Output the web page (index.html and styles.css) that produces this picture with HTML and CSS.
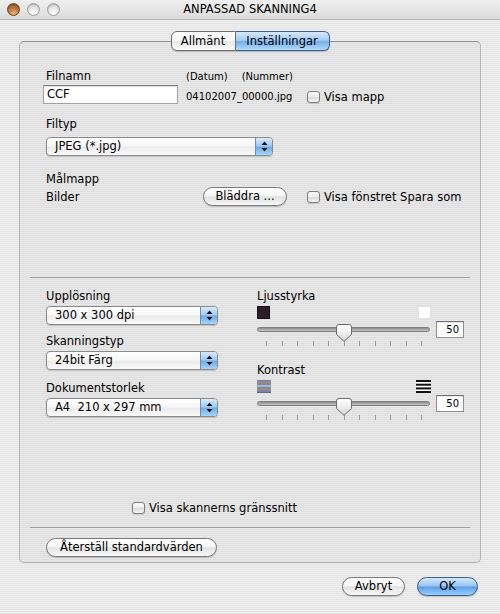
FILE: index.html
```html
<!DOCTYPE html>
<html lang="sv">
<head>
<meta charset="utf-8">
<title>ANPASSAD SKANNING4</title>
<link rel="stylesheet" href="styles.css">
</head>
<body>
<div class="window">
  <div class="titlebar">
    <div class="lights">
      <span class="light close"></span>
      <span class="light"></span>
      <span class="light"></span>
    </div>
    <div class="title">ANPASSAD SKANNING4</div>
    <div></div>
  </div>
  <div class="content">
    <div class="tabs">
      <span class="tab tab-general">Allmänt</span>
      <span class="tab tab-settings selected">Inställningar</span>
    </div>
    <div class="group">
      <div class="row-name">
        <div class="col-name">
          <div class="label">Filnamn</div>
          <div class="textfield">CCF</div>
        </div>
        <div class="col-file">
          <div class="small heads"><span>(Datum)</span><span>(Nummer)</span></div>
          <div class="small">04102007_00000.jpg</div>
        </div>
        <div class="check check-folder"><span class="cbox"></span><span>Visa mapp</span></div>
      </div>

      <div class="label filtyp">Filtyp</div>
      <div class="popup popup-wide"><span class="ptext">JPEG (*.jpg)</span><span class="stepper"><svg width="9" height="13" viewBox="0 0 9 13"><path d="M4.5 1.5 L7.5 5 H1.5Z M4.5 11.5 L7.5 8 H1.5Z" fill="#111"/></svg></span></div>

      <div class="label malmapp">Målmapp</div>
      <div class="row-dest">
        <span class="dest-name">Bilder</span>
        <button class="btn browse">Bläddra ...</button>
        <div class="check"><span class="cbox"></span><span>Visa fönstret Spara som</span></div>
      </div>

      <div class="sep sep-top"></div>

      <div class="settings">
        <div class="col-left">
          <div class="label">Upplösning</div>
          <div class="popup"><span class="ptext">300 x 300 dpi</span><span class="stepper"><svg width="9" height="13" viewBox="0 0 9 13"><path d="M4.5 1.5 L7.5 5 H1.5Z M4.5 11.5 L7.5 8 H1.5Z" fill="#111"/></svg></span></div>
          <div class="label lbl-type">Skanningstyp</div>
          <div class="popup"><span class="ptext">24bit Färg</span><span class="stepper"><svg width="9" height="13" viewBox="0 0 9 13"><path d="M4.5 1.5 L7.5 5 H1.5Z M4.5 11.5 L7.5 8 H1.5Z" fill="#111"/></svg></span></div>
          <div class="label lbl-size">Dokumentstorlek</div>
          <div class="popup"><span class="ptext">A4&nbsp;&nbsp;210 x 297 mm</span><span class="stepper"><svg width="9" height="13" viewBox="0 0 9 13"><path d="M4.5 1.5 L7.5 5 H1.5Z M4.5 11.5 L7.5 8 H1.5Z" fill="#111"/></svg></span></div>
        </div>
        <div class="col-right">
          <div class="label">Ljusstyrka</div>
          <div class="icons">
            <span class="sq sq-dark"></span>
            <span class="sq sq-light"></span>
          </div>
          <div class="slider-row">
            <div class="slider">
              <div class="track"></div>
              <svg class="thumb" width="16" height="18" viewBox="0 0 16 18">
                <defs><linearGradient id="tg1" x1="0" y1="0" x2="0" y2="1"><stop offset="0" stop-color="#ffffff"/><stop offset="0.5" stop-color="#eeeeee"/><stop offset="1" stop-color="#d4d4d4"/></linearGradient></defs>
                <path d="M3 0.5 H13 Q15.5 0.5 15.5 3 V10.5 L8 17.3 L0.5 10.5 V3 Q0.5 0.5 3 0.5Z" fill="url(#tg1)" stroke="#6d6d6d" stroke-width="1"/>
              </svg>
              <div class="ticks"><i></i><i></i><i></i><i></i><i></i><i></i><i></i><i></i><i></i><i></i><i></i></div>
            </div>
            <div class="valuebox">50</div>
          </div>
          <div class="label lbl-contrast">Kontrast</div>
          <div class="icons">
            <svg class="cicon" width="14" height="13" viewBox="0 0 14 13">
              <rect x="0" y="0" width="14" height="13" fill="#7a8aa6"/>
              <rect x="0" y="2" width="14" height="1.3" fill="#a88b70"/>
              <rect x="0" y="5.3" width="14" height="1.3" fill="#c9cfd9"/>
              <rect x="0" y="8.6" width="14" height="1.3" fill="#a88b70"/>
              <rect x="0" y="11.8" width="14" height="1.2" fill="#5e6d8a"/>
            </svg>
            <svg class="cicon" width="15" height="13" viewBox="0 0 15 13">
              <rect x="0" y="0" width="15" height="13" fill="#ffffff"/>
              <rect x="0" y="0" width="15" height="2" fill="#111"/>
              <rect x="0" y="3.7" width="15" height="2" fill="#111"/>
              <rect x="0" y="7.4" width="15" height="2" fill="#111"/>
              <rect x="0" y="11" width="15" height="2" fill="#111"/>
            </svg>
          </div>
          <div class="slider-row">
            <div class="slider">
              <div class="track"></div>
              <svg class="thumb" width="16" height="18" viewBox="0 0 16 18">
                <defs><linearGradient id="tg2" x1="0" y1="0" x2="0" y2="1"><stop offset="0" stop-color="#ffffff"/><stop offset="0.5" stop-color="#eeeeee"/><stop offset="1" stop-color="#d4d4d4"/></linearGradient></defs>
                <path d="M3 0.5 H13 Q15.5 0.5 15.5 3 V10.5 L8 17.3 L0.5 10.5 V3 Q0.5 0.5 3 0.5Z" fill="url(#tg2)" stroke="#6d6d6d" stroke-width="1"/>
              </svg>
              <div class="ticks"><i></i><i></i><i></i><i></i><i></i><i></i><i></i><i></i><i></i><i></i><i></i></div>
            </div>
            <div class="valuebox">50</div>
          </div>
        </div>
      </div>

      <div class="check check-scanner"><span class="cbox"></span><span>Visa skannerns gränssnitt</span></div>

      <div class="sep sep-bottom"></div>

      <button class="btn reset">Återställ standardvärden</button>
    </div>
    <div class="actions">
      <button class="btn cancel">Avbryt</button>
      <button class="btn ok">OK</button>
    </div>
  </div>
</div>
</body>
</html>
```

FILE: styles.css
```css
* { box-sizing: border-box; }
html, body { margin: 0; padding: 0; }
body {
  font-family: "DejaVu Sans", "Liberation Sans", sans-serif;
  font-size: 11.5px;
  color: #000;
  background: #e8e8e8;
}
.window {
  width: 500px;
  height: 614px;
  overflow: hidden;
  background: repeating-linear-gradient(180deg, #eeeeee 0, #eeeeee 1px, #e5e5e5 1px, #e5e5e5 2px);
}

/* title bar */
.titlebar {
  height: 20px;
  display: grid;
  grid-template-columns: 1fr auto 1fr;
  align-items: center;
  background: linear-gradient(#efefef, #dcdcdc);
  border-bottom: 1px solid #b4b4b4;
}
.lights { display: flex; gap: 7px; padding-left: 7px; }
.light {
  width: 13px;
  height: 13px;
  border-radius: 50%;
  border: 1px solid #9c9c9c;
  background: radial-gradient(circle at 50% 80%, #ffffff 0%, #e9e9e9 45%, #c9c9c9 100%);
  box-shadow: inset 0 1px 1px rgba(0,0,0,0.15);
}
.light.close {
  border-color: #6e4223;
  background: radial-gradient(circle at 50% 85%, #f0b27a 0%, #c27b45 45%, #7c4826 100%);
}
.title { font-size: 11.5px; line-height: 19px; letter-spacing: 0; }

/* content */
.content { padding-top: 11px; }
.tabs {
  display: flex;
  justify-content: center;
  position: relative;
  z-index: 1;
  height: 20px;
}
.tab {
  height: 20px;
  line-height: 18px;
  text-align: center;
  border: 1px solid #6e6e6e;
  background: linear-gradient(#ffffff 0%, #f6f6f6 48%, #e7e7e7 52%, #fbfbfb 100%);
  box-shadow: 0 1px 1px rgba(0,0,0,0.18);
}
.tab-general { width: 65px; border-radius: 6px 0 0 6px; }
.tab-settings { width: 94px; border-left: none; border-radius: 0 6px 6px 0; }
.tab.selected {
  border-color: #3f5f8f;
  background: linear-gradient(#d6e9fc 0%, #a2cbf4 46%, #73aeeb 54%, #b3dcfc 100%);
}

.group {
  margin: -10px 19px 0;
  height: 522px;
  padding: 27px 26px 5px;
  border: 1px solid #b3b3b3;
  border-top-color: #8e8e8e;
  border-radius: 5px;
  background: rgba(0,0,0,0.025);
}

.label { line-height: 14px; height: 14px; white-space: nowrap; }
.small { font-size: 10px; line-height: 14px; white-space: nowrap; }

/* row 1 */
.row-name { display: flex; align-items: flex-end; }
.col-name { width: 133px; flex: none; }
.col-name .label { margin-bottom: 2px; }
.textfield {
  margin-left: -3px;
  width: 135px;
  height: 19px;
  line-height: 17px;
  padding-left: 3px;
  background: #fff;
  border: 1px solid #a2a2a2;
  border-top-color: #7c7c7c;
  box-shadow: inset 0 1px 1px rgba(0,0,0,0.12);
}
.col-file { width: 121px; margin-left: 7px; flex: none; }
.heads { display: flex; gap: 14px; margin-bottom: 6px; }

.check { display: flex; align-items: center; gap: 4px; line-height: 14px; white-space: nowrap; flex: none; }
.cbox {
  width: 13px;
  height: 12px;
  border: 1px solid #7d7d7d;
  border-radius: 3px;
  background: linear-gradient(#fbfbfb 0%, #ececec 50%, #dcdcdc 55%, #f6f6f6 100%);
  box-shadow: 0 1px 1px rgba(0,0,0,0.12);
  flex: none;
}

/* popups */
.popup {
  display: flex;
  width: 172px;
  height: 19px;
  border: 1px solid #8a8a8a;
  border-radius: 4px;
  overflow: hidden;
  background: linear-gradient(#ffffff 0%, #f6f6f6 48%, #ebebeb 52%, #fafafa 100%);
  box-shadow: 0 1px 1px rgba(0,0,0,0.15);
}
.popup-wide { width: 227px; margin-top: 6px; }
.ptext { flex: 1; padding-left: 8px; line-height: 17px; white-space: nowrap; }
.stepper {
  width: 17px;
  display: flex;
  align-items: center;
  justify-content: center;
  border-left: 1px solid #6f8bb0;
  background: linear-gradient(#d8eafc 0%, #a2cbf4 46%, #6eaaea 54%, #a8d6fb 100%);
}

.filtyp { margin-top: 13px; }
.malmapp { margin-top: 16px; }

.row-dest { display: flex; align-items: center; height: 19px; margin-top: 1px; }
.dest-name { width: 157px; flex: none; }

.btn {
  font: inherit;
  color: #000;
  height: 19px;
  line-height: 17px;
  padding: 0;
  text-align: center;
  border: 1px solid #7a7a7a;
  border-radius: 10px;
  background: linear-gradient(#ffffff 0%, #f5f5f5 45%, #e2e2e2 52%, #f7f7f7 100%);
  box-shadow: 0 1px 1px rgba(0,0,0,0.18);
  flex: none;
}
.browse { width: 84px; margin-right: 20px; }

.sep {
  height: 0;
  border-top: 1px solid #9d9d9d;
  margin-left: -16px;
  margin-right: -16px;
}
.sep-top { margin-top: 71px; }

/* settings */
.settings { display: flex; align-items: flex-start; margin-top: 11px; }
.col-left { width: 172px; flex: none; }
.col-left .label { margin-bottom: 3px; }
.col-left .lbl-type { margin-top: 9px; }
.col-left .lbl-size { margin-top: 11px; }
.col-right { margin-left: 39px; width: 208px; flex: none; }
.icons {
  display: flex;
  justify-content: space-between;
  align-items: flex-start;
  width: 174px;
  height: 13px;
  margin-top: 3px;
}
.sq { width: 13px; height: 13px; }
.sq-dark { background: #2a1f29; border: 1px solid #1a121a; }
.sq-light { background: #ffffff; border: 1px solid #e2e2e2; }
.cicon { display: block; }

.slider-row { display: flex; align-items: flex-start; margin-top: 2px; }
.slider { position: relative; width: 173px; height: 25px; flex: none; }
.track {
  margin-top: 6px;
  height: 5px;
  border-radius: 3px;
  border: 1px solid #7f7f7f;
  background: linear-gradient(#8d8d8d, #c4c4c4);
}
.thumb { position: absolute; left: 79px; top: 3px; }
.ticks {
  display: flex;
  justify-content: space-between;
  margin-top: 9px;
  padding-left: 9px;
  width: 165px;
  height: 5px;
}
.ticks i { display: block; width: 1px; height: 5px; background: #9a9a9a; }
.valuebox {
  width: 28px;
  height: 17px;
  margin-left: 6px;
  flex: none;
  border: 1px solid #8f8f8f;
  border-top-color: #6f6f6f;
  background: #fff;
  font-size: 10px;
  line-height: 15px;
  text-align: right;
  padding-right: 4px;
  box-shadow: inset 0 1px 1px rgba(0,0,0,0.1);
}
.lbl-contrast { margin-top: 17px; }

.check-scanner { margin-top: 81px; margin-left: 86px; }
.sep-bottom { margin-top: 12px; }
.reset { display: block; width: 171px; margin-top: 10px; }

.actions {
  display: flex;
  justify-content: flex-end;
  gap: 12px;
  padding-right: 22px;
  margin-top: 14px;
}
.cancel { width: 63px; }
.ok {
  width: 61px;
  border-color: #3d5e90;
  background: linear-gradient(#d3e7fc 0%, #9bc7f3 45%, #5d9fe8 53%, #97d0fb 100%);
}
```
